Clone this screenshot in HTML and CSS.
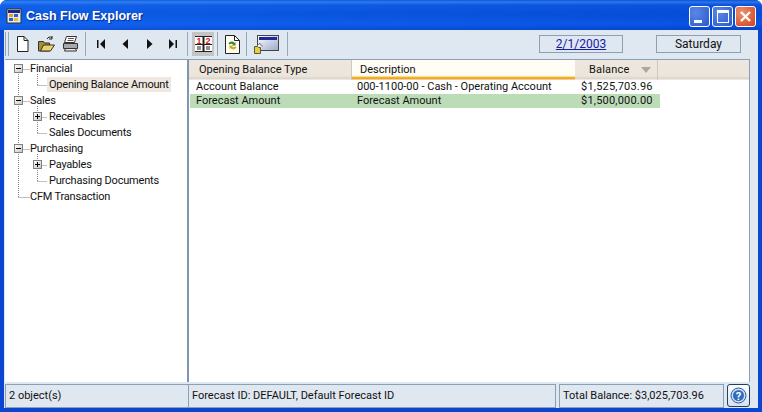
FILE: index.html

```html
<!DOCTYPE html>
<html lang="en">
<head>
  <meta charset="UTF-8">
  <title>Cash Flow Explorer</title>
  <link rel="stylesheet" href="styles.css">
</head>
<body>

<div class="window">
  <div class="titlebar">
    <svg class="app-icon" width="16" height="16" viewBox="0 0 16 16">
      <rect x="1" y="1" width="14" height="14" fill="#e8e8f0" stroke="#333"/>
      <rect x="2" y="2" width="12" height="3" fill="#1a2a80"/>
      <rect x="3" y="6" width="4" height="3" fill="#e8a020"/>
      <rect x="8" y="6" width="4" height="3" fill="#3060c0"/>
      <rect x="3" y="10" width="4" height="3" fill="#3060c0"/>
      <rect x="8" y="10" width="4" height="3" fill="#e8c020"/>
    </svg>
    <span class="title">Cash Flow Explorer</span>
    <div class="caption-btns">
      <div class="cap-btn"><span class="glyph-min"></span></div>
      <div class="cap-btn"><span class="glyph-max"></span></div>
      <div class="cap-btn close">
        <svg width="13" height="13" viewBox="0 0 13 13"><path d="M2 2l9 9M11 2l-9 9" stroke="#fff" stroke-width="2.4"/></svg>
      </div>
    </div>
  </div>

  <div class="client">
    <div class="toolbar">
      <span class="gripper"></span>
      <div class="tool">
        <svg width="13" height="16" viewBox="0 0 13 16"><path d="M1.500 .5h6.500l4 4v11h-10.500z" fill="#fff" stroke="#222"/><path d="M8 .5v4h4" fill="none" stroke="#222"/></svg>
      </div>
      <div class="tool">
        <svg width="17" height="16" viewBox="0 0 17 16"><path d="M.5 5.500h5l1 1.500h5v8h-11z" fill="#a89030" stroke="#333"/><path d="M2.500 15l3-6h11l-4 6z" fill="#e8d468" stroke="#333"/><path d="M9 3c1-2 3-2.500 5-1.500M14 0v3h-3" fill="none" stroke="#222"/></svg>
      </div>
      <div class="tool">
        <svg width="17" height="16" viewBox="0 0 17 16"><path d="M4.500 .5h10l-2 6h-10z" fill="#fff" stroke="#333"/><path d="M1.500 7.500h14v5h-14z" fill="#a8a8b0" stroke="#333"/><path d="M3.500 12.500h10l1 2.500h-12z" fill="#e8e8e8" stroke="#333"/><path d="M6 2.500h6M5.500 4.500h6" stroke="#555"/></svg>
      </div>
      <span class="sep sep-nav"></span>
      <div class="tool">
        <svg width="8" height="10" viewBox="0 0 8 10"><path d="M0 1h1.500v8h-1.500zM8 0v10l-5-5z" fill="#111"/></svg>
      </div>
      <div class="tool">
        <svg width="7" height="10" viewBox="0 0 7 10"><path d="M6 0v10l-5.500-5z" fill="#111"/></svg>
      </div>
      <div class="tool">
        <svg width="7" height="10" viewBox="0 0 7 10"><path d="M1 0v10l5.500-5z" fill="#111"/></svg>
      </div>
      <div class="tool">
        <svg width="8" height="10" viewBox="0 0 8 10"><path d="M6.500 1h1.500v8h-1.500zM0 0v10l5-5z" fill="#111"/></svg>
      </div>
      <span class="sep"></span>
      <div class="tool toggle">
        <svg width="17" height="16" viewBox="0 0 17 16">
          <rect width="17" height="16" fill="#fff"/>
          <path d="M0 .5h17M0 15.500h17M8.500 0v16M0 8.500h17" stroke="#222"/>
          <path d="M8.500 0v16" stroke="#222" stroke-width="2"/>
          <text x="4" y="8" class="digit">1</text>
          <text x="13" y="8" class="digit">2</text>
          <path d="M2 11h4M2 13h4M11 11h4M11 13h4" stroke="#222"/>
        </svg>
      </div>
      <span class="sep"></span>
      <div class="tool wide">
        <svg width="15" height="19" viewBox="0 0 15 19"><path d="M.5.500h9l5 5v13h-14z" fill="#fffef0" stroke="#222"/><path d="M9.500.500v5h5" fill="none" stroke="#222"/><path d="M3.500 9c1-3 4.500-3 6-1l1-1v3.500h-3.500l1-1c-1-1-2.500-1-3.500 0z" fill="#3a8a3a"/><path d="M11.500 12c-1 3-4.500 3-6 1l-1 1v-3.500h3.500l-1 1c1 1 2.500 1 3.500 0z" fill="#c8b020"/></svg>
      </div>
      <span class="sep"></span>
      <div class="tool wider">
        <svg width="25" height="19" viewBox="0 0 25 19">
          <defs><linearGradient id="winFill" x1="0" y1="0" x2="1" y2="1"><stop offset="0" stop-color="#fff"/><stop offset="1" stop-color="#9aa8c8"/></linearGradient></defs>
          <rect x="3.500" y=".5" width="21" height="15" fill="url(#winFill)" stroke="#444"/>
          <rect x="5" y="2" width="18" height="3" fill="#22289a"/>
          <path d="M.5 11.500h3l1 1h2v6h-6z" fill="#e8d030" stroke="#555"/>
          <path d="M3 11l3-3v2h2v2" fill="#fff" stroke="#555" stroke-width=".6"/>
        </svg>
      </div>
      <span class="sep"></span>
      <div class="toolbar-fields">
        <a class="field date" href="#">2/1/2003</a>
        <span class="field">Saturday</span>
      </div>
    </div>

    <div class="panes">
      <div class="tree">
        <svg class="tree-lines" width="60" height="150" viewBox="0 0 60 150">
          <path d="M13.500 14v123M13.500 9.500h11M32.500 14v12M32.500 25.500h10M32.500 46v28M32.500 73.500h10M13.500 137.500h11M13.500 41.500h11M13.500 89.500h11M32.500 57.500h10M32.500 105.500h10M32.500 94v28M32.500 121.500h10" fill="none" stroke="#808080" stroke-dasharray="1 1"/>
        </svg>
        <div class="node"><span class="twist minus"></span><span class="label">Financial</span></div>
        <div class="node lvl2 leaf"><span class="label current">Opening Balance Amount</span></div>
        <div class="node"><span class="twist minus"></span><span class="label">Sales</span></div>
        <div class="node lvl2"><span class="twist plus"></span><span class="label">Receivables</span></div>
        <div class="node lvl2 leaf"><span class="label">Sales Documents</span></div>
        <div class="node"><span class="twist minus"></span><span class="label">Purchasing</span></div>
        <div class="node lvl2"><span class="twist plus"></span><span class="label">Payables</span></div>
        <div class="node lvl2 leaf"><span class="label">Purchasing Documents</span></div>
        <div class="node leaf top"><span class="label">CFM Transaction</span></div>
      </div>

      <div class="list">
        <div class="list-head">
          <div class="col c1 head">Opening Balance Type</div>
          <div class="col c2 head sorted">Description</div>
          <div class="col c3 head">Balance <span class="sort-arrow"></span></div>
          <div class="head-rest"></div>
        </div>
        <div class="row">
          <div class="col c1">Account Balance</div>
          <div class="col c2">000-1100-00 - Cash - Operating Account</div>
          <div class="col c3">$1,525,703.96</div>
        </div>
        <div class="row picked">
          <div class="col c1">Forecast Amount</div>
          <div class="col c2">Forecast Amount</div>
          <div class="col c3">$1,500,000.00</div>
        </div>
      </div>
    </div>

    <div class="statusbar">
      <div class="cell s1">2 object(s)</div>
      <div class="cell s2">Forecast ID: DEFAULT, Default Forecast ID</div>
      <div class="cell s3">Total Balance: $3,025,703.96</div>
      <div class="help">
        <svg width="17" height="17" viewBox="0 0 17 17">
          <circle cx="8.500" cy="8.500" r="7.500" fill="#cfe0f4" stroke="#2a5aa0"/>
          <circle cx="8.500" cy="8.500" r="5.500" fill="#2f6cc0"/>
          <text x="8.500" y="12.500" class="help-q">?</text>
        </svg>
      </div>
    </div>
  </div>
</div>

</body>
</html>
```

FILE: styles.css

```css
body {
  margin: 0;
  width: 762px;
  height: 412px;
  overflow: hidden;
  font-family: Roboto, "Liberation Sans", Arial, sans-serif;
  font-size: 11px;
  color: #111;
  background-color: #fff;
}

.window {
  height: 412px;
  display: flex;
  flex-direction: column;
  background-color: #0a46d2;
  border-radius: 7px 7px 0 0;
  overflow: hidden;
}

.titlebar {
  height: 30px;
  flex: none;
  display: flex;
  align-items: center;
  padding: 0 6px 0 5px;
  box-sizing: border-box;
  background: linear-gradient(90deg, rgba(30, 110, 240, 0.35), rgba(4, 50, 190, 0.25)),
    linear-gradient(#0a5ae0 0, #3a8cf4 2px, #0c5ce6 5px, #0552dc 14px, #0a5ef0 24px, #0548d0 30px);
}

.app-icon {
  margin-left: 1px;
  margin-top: 1px;
}

.title {
  margin-left: 4px;
  margin-top: 2px;
  color: #fff;
  font-family: "Liberation Sans", Arial, sans-serif;
  font-weight: bold;
  font-size: 12.5px;
  text-shadow: 1px 1px 1px #0a2a90;
}

.caption-btns {
  margin-left: auto;
  display: flex;
  gap: 2px;
  margin-top: 3px;
}

.cap-btn {
  width: 21px;
  height: 21px;
  box-sizing: border-box;
  border: 1px solid #fff;
  border-radius: 3px;
  background: radial-gradient(circle at 30% 30%, #5a88e8, #2a58cc);
  display: flex;
  align-items: center;
  justify-content: center;
}

.cap-btn.close {
  background: radial-gradient(circle at 30% 30%, #f09070, #d04018);
}

.glyph-min {
  width: 8px;
  height: 3px;
  background-color: #fff;
  margin-top: 9px;
  margin-right: 4px;
}

.glyph-max {
  width: 10px;
  height: 9px;
  border: 1px solid #fff;
  border-top-width: 3px;
}

.client {
  flex: 1;
  margin: 0 4px 4px;
  display: flex;
  flex-direction: column;
  background-color: #dfe7f0;
  min-height: 0;
}

.toolbar {
  height: 28px;
  flex: none;
  display: flex;
  align-items: center;
  box-sizing: border-box;
  padding-left: 1px;
}

.gripper {
  width: 2px;
  height: 24px;
  border-left: 1px solid #94a8bc;
  border-right: 1px solid #94a8bc;
  margin-right: 1px;
}

.tool {
  width: 24px;
  height: 24px;
  flex: none;
  display: flex;
  align-items: center;
  justify-content: center;
}

.tool.toggle {
  width: 22px;
  background-color: #c4c4c4;
  margin: 0 1px 0 1px;
}

.tool.wide {
  width: 23px;
}

.tool.wider {
  width: 32px;
  margin-right: 3px;
}

.sep {
  width: 1px;
  height: 24px;
  background-color: #94a8bc;
  flex: none;
  margin: 0 3px 0 2px;
}

.sep-nav {
  margin-left: 3px;
}

.toolbar-fields {
  margin-left: auto;
  margin-right: 17px;
  display: flex;
  gap: 33px;
}

.field {
  width: 85px;
  height: 18px;
  box-sizing: border-box;
  border: 1px solid #8ca0b4;
  text-align: center;
  line-height: 16px;
  font-size: 12px;
}

.date {
  width: 84px;
  color: #1a1aa8;
}

.digit {
  fill: #c81818;
  font-family: "Liberation Sans", Arial, sans-serif;
  font-size: 9px;
  font-weight: bold;
  text-anchor: middle;
}

.panes {
  flex: 1;
  min-height: 0;
  display: flex;
  margin: 1px 8px 0 1px;
  background-color: #fff;
  border-top: 1px solid #8ca0b4;
  border-right: 1px solid #8ca0b4;
}

.tree {
  width: 184px;
  flex: none;
  box-sizing: border-box;
  position: relative;
  border-right: 2px solid #7f97ae;
}

.tree-lines {
  position: absolute;
  left: 0;
  top: 0;
}

.node {
  height: 16px;
  display: flex;
  align-items: center;
  padding-left: 9px;
  position: relative;
}

.node.lvl2 {
  padding-left: 28px;
}

.node.leaf {
  padding-left: 42px;
}

.node.leaf.top {
  padding-left: 23px;
}

.twist {
  width: 9px;
  height: 9px;
  box-sizing: border-box;
  border: 1px solid #808080;
  margin-right: 5px;
  flex: none;
  background: linear-gradient(135deg, #fff, #c8c8c0) no-repeat;
  position: relative;
}

.twist::before {
  content: "";
  position: absolute;
  left: 1px;
  top: 3px;
  width: 5px;
  height: 1px;
  background-color: #000;
}

.twist.plus::after {
  content: "";
  position: absolute;
  left: 3px;
  top: 1px;
  width: 1px;
  height: 5px;
  background-color: #000;
}

.label {
  padding: 0 2px;
  height: 15px;
  line-height: 15px;
  white-space: nowrap;
  letter-spacing: -0.2px;
}

.label.current {
  background-color: #efe8e0;
}

.list {
  flex: 1;
  min-width: 0;
  display: flex;
  flex-direction: column;
}

.list-head {
  height: 20px;
  flex: none;
  display: flex;
  background: linear-gradient(#eee7df 0, #ece5dc 16px, #d8d2c8 19px, #fff 20px);
}

.col {
  box-sizing: border-box;
  white-space: nowrap;
  padding-left: 6px;
}

.c1 {
  width: 161px;
}

.c2 {
  width: 224px;
}

.c3 {
  width: 85px;
  letter-spacing: 0.2px;
}

.head {
  height: 20px;
  line-height: 20px;
}

.c1.head {
  padding-left: 10px;
  border-right: 1px solid #cfc9be;
  width: 163px;
}

.c2.head {
  width: 223px;
  padding-left: 8px;
}

.c3.head {
  width: 83px;
  padding-left: 14px;
  border-right: 1px solid #cfc9be;
}

.sorted {
  background: linear-gradient(#fffdf6 0, #fffdf2 16px, #f8b838 17px, #e8a020 19px, #fff 20px);
}

.sort-arrow {
  display: inline-block;
  width: 0;
  height: 0;
  margin-left: 8px;
  border-left: 5px solid transparent;
  border-right: 5px solid transparent;
  border-top: 6px solid #aca89c;
}

.head-rest {
  flex: 1;
}

.row {
  height: 14px;
  line-height: 14px;
  display: flex;
  width: 470px;
  margin-left: 1px;
}

.row.picked {
  background-color: #bcdcb8;
}

.statusbar {
  height: 26px;
  flex: none;
  display: flex;
  align-items: center;
  box-sizing: border-box;
  padding: 1px 0 0 1px;
}

.cell {
  height: 24px;
  line-height: 22px;
  box-sizing: border-box;
  border: 1px solid #8ca0b4;
  padding-left: 3px;
  white-space: nowrap;
}

.s1 {
  width: 184px;
}

.s2 {
  width: 367px;
  border-left: 0;
  margin-right: 3px;
}

.s3 {
  width: 165px;
}

.help {
  width: 23px;
  height: 23px;
  box-sizing: border-box;
  margin-left: 3px;
  border: 1px solid #20406a;
  border-radius: 3px;
  background: linear-gradient(#fff, #d8e0ec);
  display: flex;
  align-items: center;
  justify-content: center;
}

.help-q {
  fill: #fff;
  font-size: 11px;
  font-weight: bold;
  text-anchor: middle;
}
```
